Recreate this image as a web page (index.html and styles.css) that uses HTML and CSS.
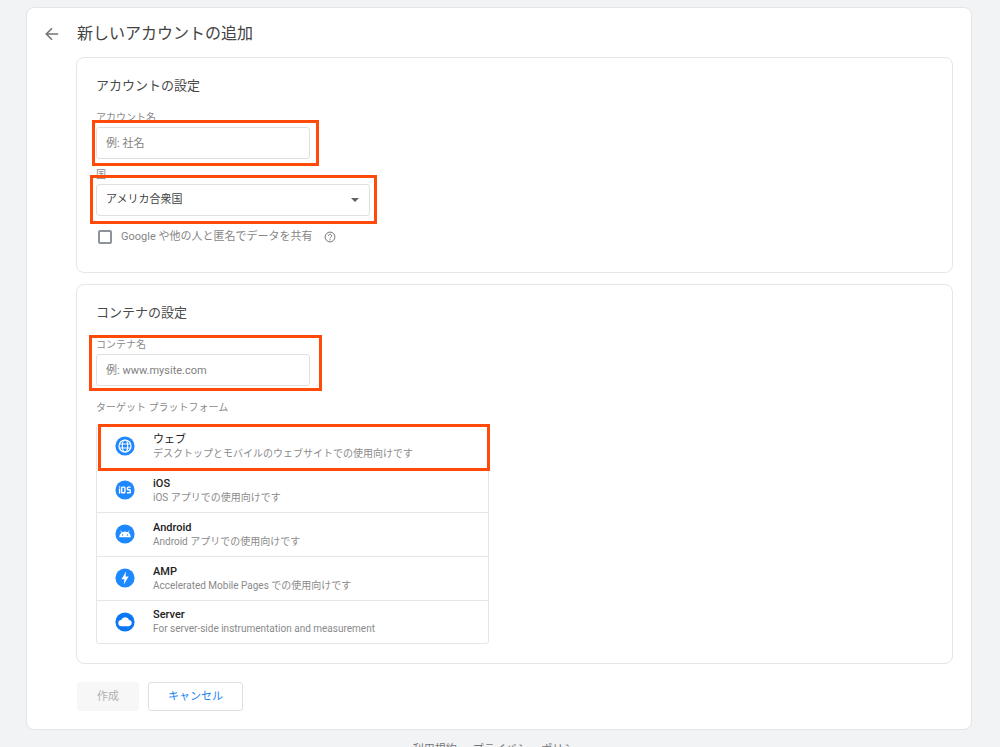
FILE: index.html
```html
<!DOCTYPE html>
<html lang="ja">
<head>
<meta charset="utf-8">
<meta name="viewport" content="width=device-width, initial-scale=1">
<title>新しいアカウントの追加</title>
<link rel="stylesheet" href="styles.css">
</head>
<body>
<main class="sheet">
  <header class="sheet-header">
    <button class="back" type="button" aria-label="戻る">
      <svg viewBox="0 0 14 14" width="14" height="14" fill="none" stroke="currentColor" stroke-width="1.6"><path d="M13.2 7H1.6M7 1.2 1.3 7 7 12.8"/></svg>
    </button>
    <h1 class="title">新しいアカウントの追加</h1>
  </header>
  <form class="form">
    <section class="card">
      <h2 class="card-title">アカウントの設定</h2>
      <div class="field">
        <label class="label" for="account">アカウント名</label>
        <div class="control control-account">
          <input class="input" id="account" type="text" placeholder="例: 社名">
          <span class="mark"></span>
        </div>
      </div>
      <div class="field">
        <label class="label" for="country">国</label>
        <div class="control control-country">
          <select class="input select" id="country"><option>アメリカ合衆国</option></select>
          <svg class="caret" viewBox="0 0 8 4" width="8" height="4"><path d="M0 0h8L4 4z" fill="#616161"/></svg>
          <span class="mark"></span>
        </div>
      </div>
      <div class="share">
        <input class="check" id="share" type="checkbox">
        <label for="share">Google や他の人と匿名でデータを共有</label>
        <svg class="help" viewBox="0 0 12 12" width="12" height="12" fill="none" stroke="#757575"><circle cx="6" cy="6" r="4.9"/><path d="M4.400 4.900a1.600 1.600 0 1 1 2.500 1.300C6.300 6.600 6 6.800 6 7.400M6 8.200v1.100"/></svg>
      </div>
    </section>
    <section class="card">
      <h2 class="card-title">コンテナの設定</h2>
      <div class="field field-container">
        <label class="label" for="container">コンテナ名</label>
        <input class="input" id="container" type="text" placeholder="例: www.mysite.com">
        <span class="mark"></span>
      </div>
      <p class="label platform-label" id="platform">ターゲット プラットフォーム</p>
      <div class="platforms" role="group" aria-labelledby="platform">
        <button class="platform" type="button">
          <svg class="icon" viewBox="0 0 20 20"><circle cx="10" cy="10" r="9.600" fill="#1e88ff"/><g fill="none" stroke="#fff" stroke-width="1.200"><circle cx="10" cy="10" r="6"/><ellipse cx="10" cy="10" rx="2.700" ry="6"/><path d="M4.500 8h11M4.500 12h11"/></g></svg>
          <span class="text"><span class="name">ウェブ</span><span class="desc">デスクトップとモバイルのウェブサイトでの使用向けです</span></span>
          <span class="mark"></span>
        </button>
        <button class="platform" type="button">
          <svg class="icon" viewBox="0 0 20 20"><circle cx="10" cy="10" r="9.600" fill="#1e88ff"/><g fill="none" stroke="#fff" stroke-width="1.400"><path d="M4.600 8.400v5M4.600 6.200v1.200"/><rect x="6.700" y="7.100" width="3.200" height="5.700" rx=".8"/><path d="M15.600 7.100h-2.300q-.9 0-.9.900v.9q0 .9.900.9h1.100q.9 0 .9.900v1.200q0 .9-.9.900h-2.500"/></g></svg>
          <span class="text"><span class="name">iOS</span><span class="desc">iOS アプリでの使用向けです</span></span>
        </button>
        <button class="platform" type="button">
          <svg class="icon" viewBox="0 0 20 20"><circle cx="10" cy="10" r="9.600" fill="#1e88ff"/><path d="M4.200 13.200a5.800 5.800 0 0 1 11.600 0z" fill="#fff"/><path d="m5.800 6.700 1.400 2.200m7-2.200-1.400 2.200" stroke="#fff" stroke-width=".8"/><circle cx="7.500" cy="11" r=".7" fill="#1e88ff"/><circle cx="12.500" cy="11" r=".7" fill="#1e88ff"/></svg>
          <span class="text"><span class="name">Android</span><span class="desc">Android アプリでの使用向けです</span></span>
        </button>
        <button class="platform" type="button">
          <svg class="icon" viewBox="0 0 20 20"><circle cx="10" cy="10" r="9.600" fill="#1e88ff"/><path d="M11 3.500 6.500 11.200h2.900L8.800 16.500l4.800-7.900h-3.100z" fill="#fff"/></svg>
          <span class="text"><span class="name">AMP</span><span class="desc">Accelerated Mobile Pages での使用向けです</span></span>
        </button>
        <button class="platform" type="button">
          <svg class="icon" viewBox="0 0 20 20"><circle cx="10" cy="10" r="9.600" fill="#0a78f5"/><path d="M6.600 14.200a3.100 3.100 0 0 1-.4-6.200 4.300 4.300 0 0 1 8-.1 3.200 3.200 0 0 1-.3 6.300z" fill="#fff"/></svg>
          <span class="text"><span class="name">Server</span><span class="desc">For server-side instrumentation and measurement</span></span>
        </button>
      </div>
    </section>
    <div class="actions">
      <button class="btn create" type="submit" disabled>作成</button>
      <button class="btn cancel" type="button">キャンセル</button>
    </div>
  </form>
</main>
<footer class="footer">
  <a href="#">利用規約</a>
  <a href="#">プライバシー ポリシー</a>
</footer>
</body>
</html>
```

FILE: styles.css
```css
* { box-sizing: border-box; }
html { height: 100%; overflow: hidden; }
body {
  margin: 0;
  padding: 7px 28px 0 26px;
  background: #f1f3f4;
  color: #424242;
  font: 11px/16px Roboto, "Noto Sans CJK JP", sans-serif;
}
button, input, select { font: inherit; color: inherit; }
h1, h2, p { margin: 0; font-weight: 400; }

.sheet {
  padding: 0 18px 18px;
  background: #fff;
  border: 1px solid #e3e5e7;
  border-radius: 8px;
}
.sheet-header {
  display: flex;
  align-items: center;
  gap: 18px;
  height: 49px;
  padding-top: 3px;
}
.back {
  display: flex;
  padding: 0;
  border: 0;
  background: none;
  color: #757575;
}
.title { font-size: 16px; line-height: 24px; color: #424242; }
.form { padding-left: 31px; }

.card {
  margin-bottom: 11px;
  padding: 17px 19px 19px;
  border: 1px solid #e4e6e8;
  border-radius: 8px;
}
.card:first-child { padding-bottom: 27px; }
.card-title { font-size: 13px; line-height: 22px; margin-bottom: 13px; color: #4a4a4a; }

.label { display: block; font-size: 10px; line-height: 16px; color: #8a8a8a; }
.field { position: relative; margin-bottom: 8px; }
.field .label { margin-bottom: 1px; }
.control { position: relative; }
.control-account { width: 214px; }
.control-country { width: 274px; }
.field-container { width: 214px; margin-bottom: 14px; }
.input {
  display: block;
  width: 100%;
  height: 32px;
  padding: 0 9px;
  border: 1px solid #e0e0e0;
  border-radius: 3px;
  background: #fff;
  outline: 0;
}
.input::placeholder { color: #808080; opacity: 1; }
.select { appearance: none; color: #424242; }
.caret { position: absolute; right: 11px; top: 14px; }

/* Highlight frames drawn over the controls */
.mark {
  position: absolute;
  z-index: 1;
  border: 3px solid #ff4a0a;
  pointer-events: none;
}
.control-account .mark { inset: -7px -9px -7px -4px; }
.control-country .mark { inset: -9px -7px -8px -6px; }
.field-container .mark { inset: -2px -12px -5px -7px; }
.platform .mark { inset: -1px -2px -3px 1px; }

.share { display: flex; align-items: center; gap: 8px; padding: 5px 2px 0; color: #858585; }
.check {
  appearance: none;
  width: 14px;
  height: 14px;
  margin: 0 1px 0 0;
  border: 2px solid #8d9399;
  border-radius: 2px;
}
.help { margin-left: 4px; }

.platform-label { margin-bottom: 8px; }
.platforms {
  width: 393px;
  max-width: 100%;
  border: 1px solid #e4e6e8;
  border-radius: 3px;
}
.platform {
  position: relative;
  display: flex;
  align-items: center;
  gap: 18px;
  width: 100%;
  height: 44px;
  padding: 0 18px 1px;
  border: 0;
  background: none;
  text-align: left;
}
.platform:first-child, .platform:last-child { height: 43px; }
.platform + .platform { border-top: 1px solid #e4e6e8; }
.icon { width: 20px; height: 20px; flex: none; }
.text { display: flex; flex-direction: column; }
.name { font-weight: 500; line-height: 14px; color: #212121; }
.platform:first-child .name { font-weight: 400; }
.desc { font-size: 10px; line-height: 13px; color: #8a8a8a; }

.actions { display: flex; gap: 9px; padding: 7px 0 0 1px; }
.btn { height: 29px; padding: 0 19px; border: 1px solid #e0e0e0; border-radius: 3px; background: #fff; }
.create { border-color: #f7f7f7; background: #f7f7f7; color: #b0b0b0; }
.cancel { color: #1a84f5; }

.footer { display: flex; justify-content: center; gap: 16px; padding-top: 12px; }
.footer a { color: #757575; text-decoration: none; }
```
